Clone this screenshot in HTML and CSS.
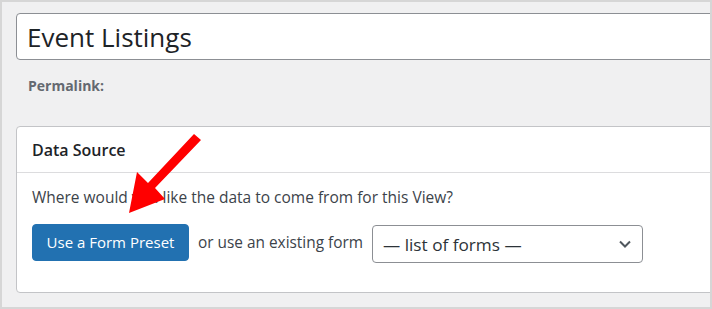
FILE: index.html
```html
<!DOCTYPE html>
<html lang="en">
<head>
    <meta charset="UTF-8">
    <meta name="viewport" content="width=device-width, initial-scale=1.0">
    <title>Event Listings</title>
    <link rel="stylesheet" href="styles.css">
</head>
<body>
    <div class="frame">
        <div class="title-wrap">
            <input type="text" class="title-input" value="Event Listings">
        </div>

        <div class="permalink">Permalink:</div>

        <div class="postbox">
            <div class="postbox-header">
                <h2>Data Source</h2>
            </div>
            <div class="inside">
                <p class="question">Where would you like the data to come from for this View?</p>
                <div class="source-row">
                    <button type="button" class="button-primary">Use a Form Preset</button>
                    <span class="or-text">or use an existing form</span>
                    <div class="select">
                        <span>— list of forms —</span>
                        <svg class="chevron" width="14" height="14" viewBox="0 0 14 14">
                            <path d="M2 4.5 L7 9.5 L12 4.5" fill="none" stroke="#50575e" stroke-width="2"/>
                        </svg>
                    </div>
                </div>
            </div>
        </div>

        <!-- annotation arrow -->
        <svg class="arrow" width="90" height="90" viewBox="0 0 90 90">
            <polygon points="74,3 81,9 35,57 45,68 9,82 17,41 28,52" fill="#ff0000"/>
        </svg>
    </div>
</body>
</html>
```

FILE: styles.css
```css
* {
    box-sizing: border-box;
}
body {
    margin: 0;
    font-family: "Open Sans", "Noto Sans", sans-serif;
    color: #3c434a;
}
.frame {
    position: relative;
    width: 712px;
    height: 309px;
    background: #f0f0f1;
    border: 2px solid #d6d6d6;
    padding: 11px 0 0 14px;
    overflow: hidden;
}
.title-wrap {
    margin-right: -6px;
}
.title-input {
    display: block;
    width: 100%;
    height: 47px;
    border: 1px solid #8c8f94;
    border-radius: 4px;
    padding: 0 10px;
    font-family: inherit;
    font-size: 26px;
    color: #1d2327;
    background: #fff;
    outline: none;
}
.permalink {
    margin: 16px 0 0 12px;
    font-size: 14px;
    font-weight: bold;
    color: #646970;
    line-height: 20px;
}
.postbox {
    margin: 30px -6px 0 0;
    background: #fff;
    border: 1px solid #c3c4c7;
    border-radius: 4px;
    height: 167px;
}
.postbox-header {
    height: 46px;
    border-bottom: 1px solid #dcdcde;
    display: flex;
    align-items: center;
    padding-left: 15px;
}
.postbox-header h2 {
    margin: 0;
    font-size: 16px;
    font-weight: 600;
    color: #1d2327;
}
.inside {
    padding: 13px 15px;
}
.question {
    margin: 0;
    font-size: 15.5px;
    line-height: 22px;
}
.source-row {
    display: flex;
    align-items: center;
    margin-top: 13px;
}
.button-primary {
    background: #2271b1;
    color: #fff;
    border: 1px solid #2271b1;
    border-radius: 4px;
    height: 37px;
    width: 157px;
    font-family: inherit;
    font-size: 15px;
    padding: 0;
    cursor: pointer;
}
.or-text {
    margin-left: 9px;
    font-size: 15.4px;
}
.select {
    margin-left: 9px;
    margin-top: 4px;
    width: 271px;
    height: 38px;
    border: 1px solid #8c8f94;
    border-radius: 4px;
    display: flex;
    align-items: center;
    justify-content: space-between;
    padding: 0 10px;
    font-size: 17.2px;
    color: #2c3338;
}
.arrow {
    position: absolute;
    left: 118px;
    top: 129px;
}
```
